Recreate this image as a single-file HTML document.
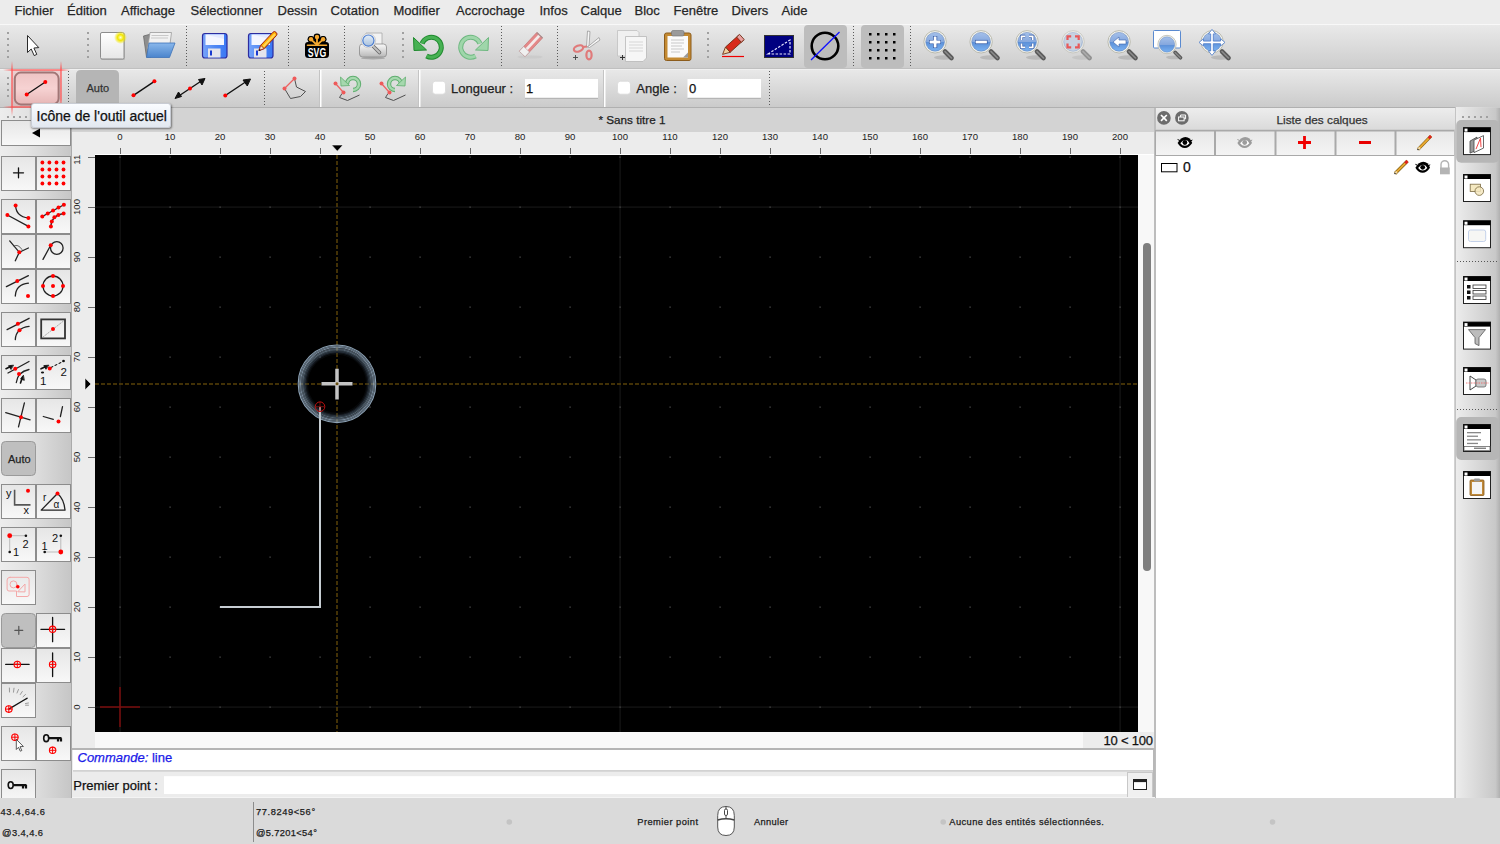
<!DOCTYPE html>
<html><head><meta charset="utf-8">
<style>
*{box-sizing:border-box;margin:0;padding:0}
html,body{width:1500px;height:844px;overflow:hidden;background:#e4e4e4;font-family:"Liberation Sans",sans-serif;color:#222;position:relative}
.a{position:absolute}
.t{position:absolute;white-space:nowrap;-webkit-text-stroke:0.25px currentColor}
#menubar{left:0;top:0;width:1500px;height:24px;background:#ececec}
#menubar .t{top:3px;font-size:13px;color:#262626;line-height:16px}
#tb1{left:0;top:24px;width:1500px;height:45px;background:linear-gradient(#e9e9e9,#cdcdcd);border-top:1px solid #f8f8f8;border-bottom:1px solid #c0c0c0}
#tb2{left:0;top:69px;width:1500px;height:39px;background:linear-gradient(#e8e8e8,#cbcbcb);border-top:1px solid #f0f0f0;border-bottom:1px solid #b0b0b0}
.hdl{position:absolute;width:2px;background:repeating-linear-gradient(#9a9a9a 0 2px,transparent 2px 6px)}
.sep{position:absolute;width:1px;background:repeating-linear-gradient(#6a6a6a 0 1px,transparent 1px 3px)}
.wsep{position:absolute;width:2px;background:#fff;border-left:1px solid #c8c8c8}
#tabbar{left:72px;top:108px;width:1083px;height:24px;background:#d3d3d3}
#hruler{left:72px;top:132px;width:1083px;height:23px;background:#ececec}
#vruler{left:72px;top:155px;width:23px;height:593px;background:#ececec}
#canvas{left:95px;top:155px;width:1043px;height:577px;background:#000;overflow:hidden}
#below{left:95px;top:732px;width:1060px;height:16px;background:#f8f8f8}
#vscroll{left:1138px;top:155px;width:16px;height:577px;background:#f8f8f8}
#lefttb{left:0;top:108px;width:72px;height:690px;background:linear-gradient(90deg,#ededed 0,#e2e2e2 40%,#c6c6c6 100%);border-right:1px solid #aaa}
.btn{position:absolute;width:35px;height:34px;background:linear-gradient(#e9e9e9,#f7f7f7);border:2px solid #a0a0a0}
#cmd{left:72px;top:748px;width:1083px;height:50px;background:#ececec}
#status{left:0;top:798px;width:1500px;height:46px;background:#dadada;border-top:1px solid #c8c8c8}
#dock{left:1154px;top:108px;width:301px;height:690px;background:#fff;border-left:2px solid #bdbdbd}
#righttb{left:1455px;top:107px;width:45px;height:691px;background:linear-gradient(90deg,#ececec,#c9c9c9);border-left:1px solid #c0c0c0}
.st{font-size:9.3px;color:#1a1a1a;line-height:12px}
</style></head><body>


<div id="menubar" class="a">
<span class="t" style="left:14.5px">Fichier</span>
<span class="t" style="left:67px">Édition</span>
<span class="t" style="left:121px">Affichage</span>
<span class="t" style="left:190.5px">Sélectionner</span>
<span class="t" style="left:277.5px">Dessin</span>
<span class="t" style="left:330.5px">Cotation</span>
<span class="t" style="left:393.5px">Modifier</span>
<span class="t" style="left:456px">Accrochage</span>
<span class="t" style="left:539.5px">Infos</span>
<span class="t" style="left:580.5px">Calque</span>
<span class="t" style="left:634.5px">Bloc</span>
<span class="t" style="left:673.5px">Fenêtre</span>
<span class="t" style="left:731.5px">Divers</span>
<span class="t" style="left:781.5px">Aide</span>
</div>
<div id="tb1" class="a"></div>
<div id="tb2" class="a"></div>
<div id="lefttb" class="a"></div>
<div id="tabbar" class="a"></div>
<div id="hruler" class="a"></div>
<div id="vruler" class="a"></div>
<div id="canvas" class="a"></div>
<div id="vscroll" class="a"></div>
<div id="below" class="a"></div>
<div id="cmd" class="a"></div>
<div id="dock" class="a"></div>
<div id="righttb" class="a"></div>
<div id="status" class="a"></div>


<svg class="a" style="left:0;top:0" width="1500" height="844" viewBox="0 0 1500 844">
<defs>
<linearGradient id="gPage" x1="0" y1="0" x2="0" y2="1"><stop offset="0" stop-color="#ffffff"/><stop offset="1" stop-color="#e6e6e6"/></linearGradient>
<radialGradient id="gGlow"><stop offset="0" stop-color="#ffffd0"/><stop offset="0.45" stop-color="#f2e600"/><stop offset="1" stop-color="#f2e600" stop-opacity="0"/></radialGradient>
<linearGradient id="gBlueFlap" x1="0" y1="0" x2="0" y2="1"><stop offset="0" stop-color="#8ab8ec"/><stop offset="1" stop-color="#4a84cc"/></linearGradient>
<linearGradient id="gLens" x1="0" y1="0" x2="0" y2="1"><stop offset="0" stop-color="#a4c0ea"/><stop offset="0.5" stop-color="#86a8de"/><stop offset="0.52" stop-color="#5c90d8"/><stop offset="1" stop-color="#7ab2f2"/></linearGradient>
<linearGradient id="gLensG" x1="0" y1="0" x2="0" y2="1"><stop offset="0" stop-color="#e4e8ee"/><stop offset="1" stop-color="#c4ccd8"/></linearGradient>
<linearGradient id="gPrinter" x1="0" y1="0" x2="0" y2="1"><stop offset="0" stop-color="#fafafa"/><stop offset="1" stop-color="#b8b8b8"/></linearGradient>
<linearGradient id="gBtn" x1="0" y1="0" x2="0" y2="1"><stop offset="0" stop-color="#e6e6e6"/><stop offset="1" stop-color="#f8f8f8"/></linearGradient>
<radialGradient id="gRing" gradientUnits="userSpaceOnUse" cx="337" cy="383.8" r="39.2"><stop offset="0.76" stop-color="#0a0c10"/><stop offset="0.84" stop-color="#3a4652"/><stop offset="0.93" stop-color="#7a8c9c"/><stop offset="0.97" stop-color="#90a2b2"/><stop offset="1" stop-color="#6a7a88"/></radialGradient>
<linearGradient id="gBtn2" x1="0" y1="0" x2="0" y2="1"><stop offset="0" stop-color="#e8e8e8"/><stop offset="1" stop-color="#f4f4f4"/></linearGradient>
<filter id="fBlur" x="-50%" y="-50%" width="200%" height="200%"><feGaussianBlur stdDeviation="0.7"/></filter>
<linearGradient id="gFlop" x1="0" y1="0" x2="1" y2="0"><stop offset="0" stop-color="#78a4fa"/><stop offset="0.5" stop-color="#5088f4"/><stop offset="1" stop-color="#3a78f4"/></linearGradient>
<linearGradient id="gLensG2" x1="0" y1="0" x2="0" y2="1"><stop offset="0" stop-color="#e4eef8"/><stop offset="1" stop-color="#a8c0dc"/></linearGradient>
</defs>

<g id="tb1">
<!-- handles -->
<g fill="#a0a0a0">
<rect x="7" y="32" width="2" height="2"/><rect x="7" y="38" width="2" height="2"/><rect x="7" y="44" width="2" height="2"/><rect x="7" y="50" width="2" height="2"/><rect x="7" y="56" width="2" height="2"/>
<rect x="87" y="32" width="2" height="2"/><rect x="87" y="38" width="2" height="2"/><rect x="87" y="44" width="2" height="2"/><rect x="87" y="50" width="2" height="2"/><rect x="87" y="56" width="2" height="2"/>
<rect x="402" y="32" width="2" height="2"/><rect x="402" y="38" width="2" height="2"/><rect x="402" y="44" width="2" height="2"/><rect x="402" y="50" width="2" height="2"/><rect x="402" y="56" width="2" height="2"/>
<rect x="707" y="32" width="2" height="2"/><rect x="707" y="38" width="2" height="2"/><rect x="707" y="44" width="2" height="2"/><rect x="707" y="50" width="2" height="2"/><rect x="707" y="56" width="2" height="2"/>
</g>
<!-- dotted separators -->
<g stroke="#5a5a5a" stroke-width="1" stroke-dasharray="1 2">
<line x1="186.5" y1="26" x2="186.5" y2="67"/>
<line x1="288.5" y1="26" x2="288.5" y2="67"/>
<line x1="344.5" y1="26" x2="344.5" y2="67"/>
<line x1="501.5" y1="26" x2="501.5" y2="67"/>
<line x1="557.5" y1="26" x2="557.5" y2="67"/>
<line x1="853.5" y1="26" x2="853.5" y2="67"/>
<line x1="910.5" y1="26" x2="910.5" y2="67"/>
</g>
<!-- arrow cursor -->
<path d="M27.5,35.5 L27.5,52.5 L31.2,49 L34.2,55.6 L36.8,54.4 L33.9,48 L38.8,47.6 Z" fill="#fff" stroke="#2a2a2a" stroke-width="1" stroke-linejoin="round"/>
<!-- new doc -->
<rect x="101" y="33" width="24" height="27" rx="1.5" fill="#9a9a9a" opacity="0.5"/>
<rect x="100.5" y="32.5" width="23.5" height="26.5" rx="1.5" fill="url(#gPage)" stroke="#8c8c8c"/>
<circle cx="120.5" cy="37.5" r="6.5" fill="url(#gGlow)"/>
<!-- open folder -->
<path d="M143.5,36 L151,34 L151,57 L146.5,57 Z" fill="#8e8e8e" stroke="#6a6a6a" stroke-width="0.8"/>
<path d="M150,32.5 L171.5,32.5 L170,44 L147.5,49 Z" fill="#f2f2f2" stroke="#9a9a9a" stroke-width="0.8"/>
<path d="M151.5,35.5 L168.5,35.5 M151,38 L168,38" stroke="#c8c8c8" stroke-width="1"/>
<path d="M149,43 L175,43 L169.5,57.5 L146.5,57.5 Z" fill="url(#gBlueFlap)" stroke="#3d72b8" stroke-width="0.8"/>
<!-- save -->
<g id="floppy">
<rect x="202.5" y="33.5" width="24.5" height="24.5" rx="2.5" fill="url(#gFlop)" stroke="#2c2ca0" stroke-width="1.2"/>
<rect x="205.5" y="34.5" width="18.5" height="10.5" fill="#f4f6ff"/>
<path d="M205.5,34.5 L224,34.5 L224,39 Z" fill="#dce4ff" opacity="0.7"/>
<rect x="208" y="48.5" width="12.5" height="9" fill="#e4e4ec"/>
<rect x="210" y="50.5" width="2" height="5" fill="#1a3ad0"/>
</g>
<use href="#floppy" x="46"/>
<g transform="translate(259,50.6) rotate(-46.8)">
<path d="M0,0 L5,-2.4 L23,-2.4 Q25,-2.4 25,0 Q25,2.4 23,2.4 L5,2.4 Z" fill="#ffb000" stroke="#9a1a10" stroke-width="0.9"/>
<rect x="6" y="-0.6" width="17" height="2" fill="#ffe070" opacity="0.8"/>
<path d="M0,0 L5,-2.4 L5,2.4 Z" fill="#f6e0b8" stroke="#9a1a10" stroke-width="0.7"/>
<circle cx="0.8" cy="0" r="0.9" fill="#222"/>
</g>
<!-- SVG logo -->
<g stroke-linecap="round">
<path d="M317,45 L311,39.3 M317,45 L317,37 M317,45 L323.1,39.3 M308,45 L326,45" stroke="#000" stroke-width="6"/>
<circle cx="311" cy="39.3" r="3.4" fill="#000"/><circle cx="317" cy="37" r="3.4" fill="#000"/><circle cx="323.1" cy="39.3" r="3.4" fill="#000"/>
<rect x="305" y="43" width="24" height="15" rx="3.5" fill="#000"/>
<path d="M317,45 L311,39.3 M317,45 L317,37 M317,45 L323.1,39.3" stroke="#f6a930" stroke-width="1.8"/>
<path d="M307.5,45.2 L326.5,45.2" stroke="#f6a930" stroke-width="1.6"/>
<circle cx="311" cy="39.3" r="2.2" fill="#f6a930"/><circle cx="317" cy="37" r="2.2" fill="#f6a930"/><circle cx="323.1" cy="39.3" r="2.2" fill="#f6a930"/>
</g>
<text x="307.8" y="57" font-family="Liberation Sans" font-weight="bold" font-size="13.5" fill="#fff" textLength="18.4" lengthAdjust="spacingAndGlyphs">SVG</text>
<!-- print preview -->
<path d="M366,33 L382,33 L382,46 L366,46 Z" fill="#f2f2f2" stroke="#a8a8a8" stroke-width="0.8"/>
<rect x="359.5" y="44" width="27" height="13" rx="3" fill="url(#gPrinter)" stroke="#8a8a8a" stroke-width="0.8"/>
<ellipse cx="373" cy="58.2" rx="12" ry="1.2" fill="#8a8a8a" opacity="0.6"/>
<line x1="373" y1="46" x2="379.5" y2="52.5" stroke="#6a6a6a" stroke-width="3.6" stroke-linecap="round"/>
<line x1="373" y1="46" x2="379.5" y2="52.5" stroke="#c0c0c0" stroke-width="1.8" stroke-linecap="round"/>
<circle cx="368.4" cy="40.6" r="7.2" fill="#f2f2f2" stroke="#c4c4c4" stroke-width="0.8"/>
<circle cx="368.4" cy="40.6" r="5.6" fill="url(#gLensG2)" stroke="#4a7cd0" stroke-width="1.2"/>
<!-- undo -->
<path d="M422,43.5 A10 10 0 1 1 426.5,56" fill="none" stroke="#1f8a2e" stroke-width="5"/>
<path d="M422,43.5 A10 10 0 1 1 426.5,56" fill="none" stroke="#47b153" stroke-width="3"/>
<path d="M413.5,37.5 L414,50.5 L426.5,50 Z" fill="#47b153" stroke="#1f8a2e" stroke-width="1"/>
<!-- redo -->
<path d="M480,43.5 A10 10 0 1 0 475.5,56" fill="none" stroke="#6eb880" stroke-width="5"/>
<path d="M480,43.5 A10 10 0 1 0 475.5,56" fill="none" stroke="#9fd6aa" stroke-width="3"/>
<path d="M488.5,37.5 L488,50.5 L475.5,50 Z" fill="#9fd6aa" stroke="#6eb880" stroke-width="1"/>
<!-- eraser -->
<ellipse cx="530" cy="57" rx="12.5" ry="1.6" fill="#c4c4c4" opacity="0.6"/>
<g transform="rotate(-47 531 44.5)">
<rect x="518" y="40.5" width="26" height="8" rx="1" fill="#e48888" stroke="#c47070" stroke-width="0.6"/>
<rect x="518" y="43.2" width="26" height="2.6" fill="#f4eaea"/>
<rect x="518" y="40.5" width="6.5" height="8" fill="#f0f0f0" stroke="#b8a8a8" stroke-width="0.6"/>
<rect x="543" y="40.5" width="1.2" height="8" fill="#a89090"/>
</g>
<!-- scissors -->
<path d="M586.5,47 L587.5,31 L590,31.5 L589,46 Z" fill="#f6f6f6" stroke="#9a9a9a" stroke-width="0.8"/>
<path d="M587.5,47 L599,37.5 L600,40 L589.5,47.5 Z" fill="#f6f6f6" stroke="#9a9a9a" stroke-width="0.8"/>
<ellipse cx="578.5" cy="48.5" rx="4.8" ry="2.9" fill="none" stroke="#e07a7a" stroke-width="2.2" transform="rotate(-20 578.5 48.5)"/>
<ellipse cx="589" cy="55" rx="2.6" ry="4.4" fill="none" stroke="#e07a7a" stroke-width="2.2"/>
<path d="M583,47 L587,46.5" stroke="#e07a7a" stroke-width="2"/>
<path d="M573,57.5 L578,57.5 M575.5,55 L575.5,60" stroke="#444" stroke-width="0.9"/>
<!-- copy -->
<path d="M617.5,30.5 L637,30.5 L639,32.5 L639,56 L617.5,56 Z" fill="#f0f0f0" stroke="#c0c0c0" stroke-width="0.8"/>
<path d="M625.5,36.5 L646.5,36.5 L646.5,58 L643,61.5 L625.5,61.5 Z" fill="#f6f6f6" stroke="#b8b8b8" stroke-width="0.8"/>
<path d="M629,42 L643,42 M629,45 L643,45 M629,48 L643,48 M629,51 L643,51" stroke="#d6d6d6" stroke-width="1"/>
<path d="M620,57.5 L625,57.5 M622.5,55 L622.5,60" stroke="#333" stroke-width="1"/>
<!-- paste -->
<rect x="664.5" y="33" width="26.5" height="27.5" rx="2" fill="#c48a32" stroke="#8c5c1c" stroke-width="1"/>
<rect x="667.5" y="36" width="20.5" height="21.5" fill="#fafafa"/>
<rect x="671.5" y="30.5" width="12.5" height="5.5" rx="1.5" fill="#9a9a9a" stroke="#707070" stroke-width="0.6"/>
<path d="M671,40 L684,40 M671,43 L684,43 M671,46 L682,46 M671,49 L684,49 M671,52 L680,52" stroke="#c8c8c8" stroke-width="1"/>
<path d="M683,57.5 L688,52.5 L688,57.5 Z" fill="#9a9a9a"/>
<!-- pencil -->
<line x1="722" y1="56.5" x2="744" y2="56.5" stroke="#f00000" stroke-width="1.2"/>
<g transform="rotate(-42 733 45)">
<rect x="726" y="41.5" width="18" height="7" fill="#d82a1a" stroke="#6a2a10" stroke-width="0.8"/>
<rect x="741" y="41.5" width="4" height="7" fill="#e8a0a0" stroke="#6a2a10" stroke-width="0.8"/>
<path d="M726,41.5 L719,45 L726,48.5 Z" fill="#f0d0a0" stroke="#6a2a10" stroke-width="0.8"/>
</g>
<!-- blue rect -->
<rect x="764.5" y="35.5" width="29" height="22" fill="#000080" stroke="#333" stroke-width="1"/>
<path d="M768,54 L790,40 L790,54 Z" fill="none" stroke="#e8e8ff" stroke-width="1.2" stroke-dasharray="2.5 1.5"/>
<!-- pressed: circle -->
<rect x="804" y="25" width="43" height="43" rx="4" fill="#bdbdbd"/>
<circle cx="825" cy="46" r="13.3" fill="none" stroke="#000" stroke-width="2.6"/>
<line x1="811" y1="60" x2="839.5" y2="32" stroke="#1010ff" stroke-width="1.3"/>
<!-- pressed: grid -->
<rect x="861" y="25" width="43" height="43" rx="4" fill="#bdbdbd"/>
<g fill="#000">
<rect x="869" y="33" width="2.5" height="2.5"/><rect x="877" y="33" width="2.5" height="2.5"/><rect x="885" y="33" width="2.5" height="2.5"/><rect x="893" y="33" width="2.5" height="2.5"/>
<rect x="869" y="41" width="2.5" height="2.5"/><rect x="877" y="41" width="2.5" height="2.5"/><rect x="885" y="41" width="2.5" height="2.5"/><rect x="893" y="41" width="2.5" height="2.5"/>
<rect x="869" y="49" width="2.5" height="2.5"/><rect x="877" y="49" width="2.5" height="2.5"/><rect x="885" y="49" width="2.5" height="2.5"/><rect x="893" y="49" width="2.5" height="2.5"/>
<rect x="869" y="57" width="2.5" height="2.5"/><rect x="877" y="57" width="2.5" height="2.5"/><rect x="885" y="57" width="2.5" height="2.5"/><rect x="893" y="57" width="2.5" height="2.5"/>
</g>
<!-- zoom lenses -->
<g id="lensA">
<ellipse cx="944" cy="57.5" rx="10" ry="2.2" fill="#7a7a7a" opacity="0.3"/>
<line x1="945" y1="51.5" x2="951.5" y2="58" stroke="#5a5a5a" stroke-width="4.6" stroke-linecap="round"/>
<line x1="945" y1="51.5" x2="951.5" y2="58" stroke="#8a8a8a" stroke-width="1.6" stroke-linecap="round"/>
<circle cx="935.1" cy="41.8" r="11.2" fill="#f4f4ee" stroke="#b4b4a8" stroke-width="0.9"/>
<circle cx="935.1" cy="41.8" r="9.4" fill="url(#gLens)" stroke="#5a7cb4" stroke-width="0.5"/>
</g>
<path d="M929,42 L941,42 M935.1,36 L935.1,48" stroke="#2a52a0" stroke-width="4.2"/>
<path d="M929.6,42 L940.4,42 M935.1,36.6 L935.1,47.4" stroke="#fff" stroke-width="2.8"/>
<use href="#lensA" x="46"/>
<path d="M975,42 L987.5,42" stroke="#2a52a0" stroke-width="4.2"/>
<path d="M975.6,42 L986.9,42" stroke="#fff" stroke-width="2.8"/>
<use href="#lensA" x="92"/>
<path d="M1021.5,40 L1021.5,36.3 L1025.2,36.3 M1029,36.3 L1032.7,36.3 L1032.7,40 M1032.7,43.6 L1032.7,47.3 L1029,47.3 M1025.2,47.3 L1021.5,47.3 L1021.5,43.6" stroke="#2a52a0" stroke-width="3" fill="none"/><path d="M1021.5,40 L1021.5,36.3 L1025.2,36.3 M1029,36.3 L1032.7,36.3 L1032.7,40 M1032.7,43.6 L1032.7,47.3 L1029,47.3 M1025.2,47.3 L1021.5,47.3 L1021.5,43.6" stroke="#fff" stroke-width="1.8" fill="none"/>
<g opacity="0.55"><use href="#lensA" x="138"/></g>
<circle cx="1073" cy="42" r="8.8" fill="#c8d2e0"/>
<path d="M1067.5,40 L1067.5,36.3 L1071.2,36.3 M1075,36.3 L1078.7,36.3 L1078.7,40 M1078.7,43.6 L1078.7,47.3 L1075,47.3 M1071.2,47.3 L1067.5,47.3 L1067.5,43.6" stroke="#e85858" stroke-width="2.2" fill="none"/>
<use href="#lensA" x="184"/>
<path d="M1113,42 L1119,37 L1119,40 L1126,40 L1126,44 L1119,44 L1119,47 Z" fill="#fff" stroke="#3a62a8" stroke-width="0.6"/>
<rect x="1153.5" y="30.5" width="27" height="17.5" rx="1" fill="#fff" stroke="#5a8ad0" stroke-width="1"/>
<g transform="translate(1167,44.5) scale(0.82) translate(-935.1,-41.8)"><use href="#lensA"/></g>
<use href="#lensA" x="277"/>
<g transform="translate(1212,42.4)">
<path d="M0,-13 L3.6,-8.5 L1.3,-8.5 L1.3,-1.3 L8.5,-1.3 L8.5,-3.6 L13,0 L8.5,3.6 L8.5,1.3 L1.3,1.3 L1.3,8.5 L3.6,8.5 L0,13 L-3.6,8.5 L-1.3,8.5 L-1.3,1.3 L-8.5,1.3 L-8.5,3.6 L-13,0 L-8.5,-3.6 L-8.5,-1.3 L-1.3,-1.3 L-1.3,-8.5 L-3.6,-8.5 Z" fill="#fff" stroke="#4a7ac8" stroke-width="0.8" stroke-linejoin="round"/>
</g>
</g>

<g id="tb2">
<g fill="#a0a0a0">
<rect x="7" y="77" width="2" height="2"/><rect x="7" y="83" width="2" height="2"/><rect x="7" y="89" width="2" height="2"/><rect x="7" y="95" width="2" height="2"/>
</g>
<g stroke="#5a5a5a" stroke-width="1" stroke-dasharray="1 2">
<line x1="68.5" y1="71" x2="68.5" y2="106"/>
<line x1="264.5" y1="71" x2="264.5" y2="106"/>
<line x1="769.5" y1="71" x2="769.5" y2="106"/>
</g>
<!-- white separators -->
<g>
<rect x="319" y="70" width="1" height="37" fill="#c4c4c4"/><rect x="320" y="70" width="1.5" height="37" fill="#ffffff"/>
<rect x="418" y="70" width="1" height="37" fill="#c4c4c4"/><rect x="419" y="70" width="1.5" height="37" fill="#ffffff"/>
<rect x="603" y="70" width="1" height="37" fill="#c4c4c4"/><rect x="604" y="70" width="1.5" height="37" fill="#ffffff"/>
</g>
<!-- current tool (pink) -->
<defs>
<linearGradient id="gRV" x1="0" y1="0" x2="0" y2="1"><stop offset="0" stop-color="#ff5050" stop-opacity="0"/><stop offset="0.15" stop-color="#ff5050" stop-opacity="0.62"/><stop offset="0.82" stop-color="#ff5050" stop-opacity="0.62"/><stop offset="1" stop-color="#ff5050" stop-opacity="0"/></linearGradient>
<linearGradient id="gRH" x1="0" y1="0" x2="1" y2="0"><stop offset="0" stop-color="#ff5050" stop-opacity="0"/><stop offset="0.14" stop-color="#ff5050" stop-opacity="0.62"/><stop offset="0.86" stop-color="#ff5050" stop-opacity="0.62"/><stop offset="1" stop-color="#ff5050" stop-opacity="0"/></linearGradient>
<linearGradient id="gPink" x1="0" y1="0" x2="0" y2="1"><stop offset="0" stop-color="#eec4c4"/><stop offset="0.5" stop-color="#f6d2d2"/><stop offset="1" stop-color="#e6b6b6"/></linearGradient>
</defs>
<rect x="12" y="70" width="49" height="37" fill="#ff8080" opacity="0.22"/>
<rect x="14.8" y="72.6" width="43.8" height="31.8" rx="6" fill="url(#gPink)" stroke="#a07676" stroke-width="2"/>
<line x1="26.7" y1="94.5" x2="45.3" y2="82" stroke="#111" stroke-width="1.3"/>
<circle cx="26.7" cy="94.5" r="2" fill="#f00"/><circle cx="45.3" cy="82" r="2" fill="#f00"/>
<g filter="url(#fBlur)">
<rect x="11" y="61" width="2" height="55" fill="url(#gRV)"/>
<rect x="60" y="61" width="2" height="47" fill="url(#gRV)"/>
<rect x="3" y="69" width="67" height="2" fill="url(#gRH)"/>
<rect x="3" y="106" width="67" height="2" fill="url(#gRH)"/>
</g>
<!-- auto pressed -->
<path d="M76,107 L76,75 Q76,70 81,70 L114,70 Q119,70 119,75 L119,107 Z" fill="#b5b5b5"/>
<!-- line icons -->
<line x1="133.5" y1="95.3" x2="154.4" y2="81.3" stroke="#111" stroke-width="1.4"/>
<circle cx="133.5" cy="95.3" r="2" fill="#f00"/><circle cx="154.4" cy="81.3" r="2" fill="#f00"/>
<line x1="178" y1="96.5" x2="202" y2="80.5" stroke="#111" stroke-width="1.4"/>
<path d="M175,98.5 L178.5,92 L181.5,96.5 Z M205,78.5 L198.5,79.5 L202,85 Z" fill="#111" stroke="#111" stroke-width="1"/>
<circle cx="190" cy="88.5" r="2" fill="#f00"/>
<line x1="225.3" y1="95.5" x2="247" y2="81" stroke="#111" stroke-width="1.4"/>
<path d="M250.5,79 L243,80 L247.3,86 Z" fill="#111" stroke="#111" stroke-width="1"/>
<circle cx="225.3" cy="95.5" r="2" fill="#f00"/>
<!-- polyline (disabled) -->
<path d="M294.5,78.5 L296.5,87 L305.5,91.5 L300.5,96.5 L290.5,98.5 L284.5,88.5" fill="none" stroke="#505050" stroke-width="1"/>
<line x1="284.5" y1="88.5" x2="294.5" y2="78.5" stroke="#ee6060" stroke-width="1.2"/>
<circle cx="284.5" cy="88.5" r="2" fill="#ee5a5a"/><circle cx="294.5" cy="78.5" r="2" fill="#ee5a5a"/>
<!-- undo segment -->
<path d="M342,93.5 L339.5,97.5 L347.5,100.5 L359.5,95" fill="none" stroke="#505050" stroke-width="1"/>
<path d="M347,84 A6 6 0 1 1 353,90" fill="none" stroke="#5fae6f" stroke-width="4.4"/>
<path d="M347,84 A6 6 0 1 1 353,90" fill="none" stroke="#a6d8ae" stroke-width="2.4"/>
<path d="M340.5,77 L341,86 L349.5,85.5 Z" fill="#a6d8ae" stroke="#5fae6f" stroke-width="0.8"/>
<line x1="335.5" y1="83.5" x2="343.5" y2="92.5" stroke="#ee6060" stroke-width="1.2"/>
<circle cx="335.5" cy="83.5" r="2" fill="#ee5a5a"/><circle cx="343.5" cy="92.5" r="2" fill="#ee5a5a"/>
<!-- redo segment -->
<path d="M388,93.5 L385.5,97.5 L393.5,100.5 L405.5,95" fill="none" stroke="#505050" stroke-width="1"/>
<path d="M401,84 A6 6 0 1 0 395,90" fill="none" stroke="#5fae6f" stroke-width="4.4"/>
<path d="M401,84 A6 6 0 1 0 395,90" fill="none" stroke="#a6d8ae" stroke-width="2.4"/>
<path d="M405.5,77 L405,86 L396.5,85.5 Z" fill="#a6d8ae" stroke="#5fae6f" stroke-width="0.8"/>
<line x1="381.5" y1="83.5" x2="389.5" y2="92.5" stroke="#ee6060" stroke-width="1.2"/>
<circle cx="381.5" cy="83.5" r="2" fill="#ee5a5a"/><circle cx="389.5" cy="92.5" r="2" fill="#ee5a5a"/>
<!-- checkboxes and inputs -->
<rect x="432.5" y="81.2" width="13" height="13" rx="3" fill="#fff" stroke="#d8d8d8" stroke-width="0.8"/>
<rect x="525" y="79" width="73" height="19.5" fill="#fff"/>
<rect x="525" y="97.8" width="73" height="1" fill="#a8a8a8"/>
<rect x="617.5" y="81.2" width="13" height="13" rx="3" fill="#fff" stroke="#d8d8d8" stroke-width="0.8"/>
<rect x="687.5" y="79" width="73.5" height="19.5" fill="#fff"/>
<rect x="687.5" y="97.8" width="73.5" height="1" fill="#a8a8a8"/>
</g>

<g id="lefttb">
<rect x="7" y="116" width="2" height="2" fill="#a0a0a0"/>
<rect x="13" y="116" width="2" height="2" fill="#a0a0a0"/>
<rect x="19" y="116" width="2" height="2" fill="#a0a0a0"/>
<rect x="25" y="116" width="2" height="2" fill="#a0a0a0"/>
<rect x="1.5" y="120.5" width="69" height="25" fill="url(#gBtn)" stroke="#8c8c8c" stroke-width="1"/>
<path d="M32,133 L40,128.5 L40,137.5 Z" fill="#000"/>
<rect x="1.5" y="156.5" width="34" height="34" fill="url(#gBtn)" stroke="#8c8c8c" stroke-width="1"/>
<rect x="36.5" y="156.5" width="34" height="34" fill="url(#gBtn)" stroke="#8c8c8c" stroke-width="1"/>
<rect x="1.5" y="199.5" width="34" height="34" fill="url(#gBtn)" stroke="#8c8c8c" stroke-width="1"/>
<rect x="36.5" y="199.5" width="34" height="34" fill="url(#gBtn)" stroke="#8c8c8c" stroke-width="1"/>
<rect x="1.5" y="234.5" width="34" height="34" fill="url(#gBtn)" stroke="#8c8c8c" stroke-width="1"/>
<rect x="36.5" y="234.5" width="34" height="34" fill="url(#gBtn)" stroke="#8c8c8c" stroke-width="1"/>
<rect x="1.5" y="269.5" width="34" height="34" fill="url(#gBtn)" stroke="#8c8c8c" stroke-width="1"/>
<rect x="36.5" y="269.5" width="34" height="34" fill="url(#gBtn)" stroke="#8c8c8c" stroke-width="1"/>
<rect x="1.5" y="312.5" width="34" height="34" fill="url(#gBtn)" stroke="#8c8c8c" stroke-width="1"/>
<rect x="36.5" y="312.5" width="34" height="34" fill="url(#gBtn)" stroke="#8c8c8c" stroke-width="1"/>
<rect x="1.5" y="355.5" width="34" height="34" fill="url(#gBtn)" stroke="#8c8c8c" stroke-width="1"/>
<rect x="36.5" y="355.5" width="34" height="34" fill="url(#gBtn)" stroke="#8c8c8c" stroke-width="1"/>
<rect x="1.5" y="398.5" width="34" height="34" fill="url(#gBtn)" stroke="#8c8c8c" stroke-width="1"/>
<rect x="36.5" y="398.5" width="34" height="34" fill="url(#gBtn)" stroke="#8c8c8c" stroke-width="1"/>
<rect x="1.5" y="441.5" width="34" height="34" rx="4" fill="#bfbfbf" stroke="#9a9a9a" stroke-width="1"/>
<rect x="1.5" y="484.5" width="34" height="34" fill="url(#gBtn)" stroke="#8c8c8c" stroke-width="1"/>
<rect x="36.5" y="484.5" width="34" height="34" fill="url(#gBtn)" stroke="#8c8c8c" stroke-width="1"/>
<rect x="1.5" y="527.5" width="34" height="34" fill="url(#gBtn)" stroke="#8c8c8c" stroke-width="1"/>
<rect x="36.5" y="527.5" width="34" height="34" fill="url(#gBtn)" stroke="#8c8c8c" stroke-width="1"/>
<rect x="1.5" y="570.5" width="34" height="34" fill="url(#gBtn)" stroke="#8c8c8c" stroke-width="1"/>
<rect x="1.5" y="613.5" width="34" height="34" rx="4" fill="#bfbfbf" stroke="#9a9a9a" stroke-width="1"/>
<rect x="36.5" y="613.5" width="34" height="34" fill="url(#gBtn)" stroke="#8c8c8c" stroke-width="1"/>
<rect x="1.5" y="648.5" width="34" height="34" fill="url(#gBtn)" stroke="#8c8c8c" stroke-width="1"/>
<rect x="36.5" y="648.5" width="34" height="34" fill="url(#gBtn)" stroke="#8c8c8c" stroke-width="1"/>
<rect x="1.5" y="683.5" width="34" height="34" fill="url(#gBtn)" stroke="#8c8c8c" stroke-width="1"/>
<rect x="1.5" y="726.5" width="34" height="34" fill="url(#gBtn)" stroke="#8c8c8c" stroke-width="1"/>
<rect x="36.5" y="726.5" width="34" height="34" fill="url(#gBtn)" stroke="#8c8c8c" stroke-width="1"/>
<rect x="1.5" y="769.5" width="34" height="34" fill="url(#gBtn)" stroke="#8c8c8c" stroke-width="1"/>
</g>
<g id="lefticons" stroke-linecap="round">
<!-- row 156 -->
<g transform="translate(1,156)">
<path d="M12.5,16.8 L22.5,16.8 M17.5,11.8 L17.5,21.8" stroke="#111" stroke-width="1.3"/>
</g>
<g transform="translate(36,156)" fill="#f00">
<circle cx="6.4" cy="6.5" r="1.9"/><circle cx="13.4" cy="6.5" r="1.9"/><circle cx="20.5" cy="6.5" r="1.9"/><circle cx="27.5" cy="6.5" r="1.9"/>
<circle cx="6.4" cy="13.5" r="1.9"/><circle cx="13.4" cy="13.5" r="1.9"/><circle cx="20.5" cy="13.5" r="1.9"/><circle cx="27.5" cy="13.5" r="1.9"/>
<circle cx="6.4" cy="20.5" r="1.9"/><circle cx="13.4" cy="20.5" r="1.9"/><circle cx="20.5" cy="20.5" r="1.9"/><circle cx="27.5" cy="20.5" r="1.9"/>
<circle cx="6.4" cy="27.5" r="1.9"/><circle cx="13.4" cy="27.5" r="1.9"/><circle cx="20.5" cy="27.5" r="1.9"/><circle cx="27.5" cy="27.5" r="1.9"/>
</g>
<!-- row 199 -->
<g transform="translate(1,199)">
<path d="M6.4,16 L27.4,27.4 M14.6,6.4 Q15,17.5 27.4,18.9" fill="none" stroke="#222" stroke-width="1.3"/>
<g fill="#f00"><circle cx="6.4" cy="16" r="2"/><circle cx="27.4" cy="27.4" r="2"/><circle cx="14.6" cy="6.4" r="2"/><circle cx="27.4" cy="18.9" r="2"/></g>
</g>
<g transform="translate(36,199)">
<path d="M6.3,17.5 L27.9,5.7 M14.9,27.4 Q15.5,16 27.6,14.6" fill="none" stroke="#222" stroke-width="1.3"/>
<g fill="#f00"><circle cx="6.3" cy="17.5" r="2"/><circle cx="11.7" cy="14.5" r="2"/><circle cx="17.1" cy="11.6" r="2"/><circle cx="22.5" cy="8.6" r="2"/><circle cx="27.9" cy="5.7" r="2"/>
<circle cx="14.9" cy="27.4" r="2"/><circle cx="15.8" cy="22.5" r="2"/><circle cx="18.4" cy="18.2" r="2"/><circle cx="22.4" cy="15.9" r="2"/><circle cx="27.6" cy="14.6" r="2"/></g>
</g>
<!-- row 234 -->
<g transform="translate(1,234)">
<path d="M8.7,6.9 L18.3,18.3 L27.4,14 M18.3,18.3 L14.3,26.8" fill="none" stroke="#222" stroke-width="1.3"/>
<path d="M13,12 Q17,9.5 21,15.5" fill="none" stroke="#444" stroke-width="0.8"/>
<circle cx="18.3" cy="18.3" r="2" fill="#f00"/>
</g>
<g transform="translate(36,234)">
<path d="M7,25.4 L14.7,11.2" stroke="#222" stroke-width="1.3"/>
<circle cx="20.8" cy="14" r="6.3" fill="none" stroke="#222" stroke-width="1.3"/>
<circle cx="14.7" cy="11.2" r="2" fill="#f00"/>
</g>
<!-- row 269 -->
<g transform="translate(1,269)">
<path d="M5.4,17.6 L27.4,6.7 M14.3,27 Q15,15.5 27.4,14.2" fill="none" stroke="#222" stroke-width="1.3"/>
<circle cx="16.3" cy="12" r="2" fill="#f00"/><circle cx="27" cy="27" r="2" fill="#f00"/>
</g>
<g transform="translate(36,269)">
<circle cx="17" cy="17" r="10" fill="none" stroke="#222" stroke-width="1.3"/>
<g fill="#f00"><circle cx="17" cy="17" r="2"/><circle cx="17" cy="7" r="2"/><circle cx="17" cy="27" r="2"/><circle cx="7" cy="17" r="2"/><circle cx="27" cy="17" r="2"/></g>
</g>
<!-- row 312 -->
<g transform="translate(1,312)">
<path d="M6.1,17.6 L28.1,6.3 M14.3,27.6 Q15,16 28.1,14.4" fill="none" stroke="#222" stroke-width="1.3"/>
<circle cx="16.9" cy="11.7" r="2" fill="#f00"/><circle cx="18.5" cy="18.3" r="2" fill="#f00"/>
</g>
<g transform="translate(36,312)">
<rect x="5.2" y="7.4" width="23.8" height="19" fill="none" stroke="#333" stroke-width="1.8"/>
<path d="M7,25 L27.5,9" stroke="#999" stroke-width="0.8" stroke-dasharray="1.5 1.5"/>
<circle cx="17" cy="16.9" r="2" fill="#f00"/>
</g>
<!-- row 355 -->
<g transform="translate(0,355)">
<path d="M8,18 L29,6.5 M16.3,27.5 Q17.5,17 29,14.5" fill="none" stroke="#222" stroke-width="1.3"/>
<path d="M6,13.7 L11,11.2 M20.5,28 L22.5,22" stroke="#111" stroke-width="1.6"/>
<path d="M13.2,10.2 L8.5,10.7 L10.8,14.2 Z M23.2,20.5 L20.6,24 L24,25.2 Z" fill="#111" stroke="#111" stroke-width="0.8" stroke-linejoin="round"/>
<circle cx="15.3" cy="13.7" r="2" fill="#f00"/><circle cx="19" cy="19" r="2" fill="#f00"/>
</g>
<g transform="translate(36,355)">
<path d="M15,12.5 L28,6" stroke="#222" stroke-width="1.1" stroke-dasharray="2 2.5"/>
<path d="M5,13.8 L10,11.5" stroke="#111" stroke-width="1.6"/>
<path d="M12.5,10.2 L7.8,10.6 L9.8,14 Z" fill="#111" stroke="#111" stroke-width="0.8" stroke-linejoin="round"/>
<ellipse cx="6.5" cy="17.5" rx="1.6" ry="1.1" fill="#111"/>
<circle cx="13.7" cy="13.5" r="2" fill="#f00"/><circle cx="27.5" cy="6" r="1.3" fill="#111"/>
<text x="4" y="30" font-family="Liberation Sans" font-size="11.5" fill="#111">1</text>
<text x="24.5" y="20.5" font-family="Liberation Sans" font-size="11.5" fill="#111">2</text>
</g>
<!-- row 398 -->
<g transform="translate(1,398)">
<path d="M4.7,14.7 L29.1,21.8 M23.4,4.8 L17.5,28.9" stroke="#222" stroke-width="1.3"/>
<circle cx="20" cy="19.2" r="2" fill="#f00"/>
</g>
<g transform="translate(36,398)">
<path d="M7.3,18.5 L17.3,21.4 M26.5,8.6 L24.4,18.5" stroke="#222" stroke-width="1.3"/>
<circle cx="22.5" cy="23.5" r="2" fill="#f00"/>
</g>
<!-- row 484 -->
<g transform="translate(1,484)">
<path d="M13.6,5.7 L13.6,20.9 L29.5,20.9" fill="none" stroke="#555" stroke-width="1.6" stroke-linecap="butt"/>
<text x="5" y="13" font-family="Liberation Sans" font-size="11" fill="#111">y</text>
<text x="22.5" y="30" font-family="Liberation Sans" font-size="11" fill="#111">x</text>
<circle cx="27" cy="6.7" r="2" fill="#f00"/>
</g>
<g transform="translate(36,484)">
<path d="M5.2,26.1 L29,26.1 M5.2,26.1 L21.5,9.5 Q28,15 29,26.1" fill="none" stroke="#222" stroke-width="1.3"/>
<text x="7" y="17" font-family="Liberation Sans" font-size="10" fill="#111">r</text>
<text x="17.5" y="24" font-family="Liberation Sans" font-size="10" fill="#111">α</text>
<circle cx="21.5" cy="9.5" r="2" fill="#f00"/>
</g>
<!-- row 527 -->
<g transform="translate(1,527)">
<path d="M8.7,8.7 L24.9,8.7 M8.7,8.7 L8.7,25" stroke="#bbb" stroke-width="1"/>
<circle cx="8.7" cy="8.7" r="2.4" fill="#f00"/><circle cx="24.9" cy="8.7" r="1.3" fill="#111"/><circle cx="8.7" cy="25" r="1.3" fill="#111"/>
<text x="21.5" y="20.5" font-family="Liberation Sans" font-size="11" fill="#111">2</text>
<text x="12" y="28.5" font-family="Liberation Sans" font-size="11" fill="#111">1</text>
</g>
<g transform="translate(36,527)">
<path d="M8.7,25 L24.8,25 M24.8,8.7 L24.8,25" stroke="#bbb" stroke-width="1"/>
<circle cx="24.8" cy="25" r="2.4" fill="#f00"/><circle cx="24.8" cy="8.7" r="1.3" fill="#111"/><circle cx="8.7" cy="25" r="1.3" fill="#111"/>
<text x="16" y="14.5" font-family="Liberation Sans" font-size="11" fill="#111">2</text>
<text x="5.5" y="22.5" font-family="Liberation Sans" font-size="11" fill="#111">1</text>
</g>
<!-- row 570 (disabled) -->
<g transform="translate(1,570)">
<path d="M9,7.3 L26,7.3 Q28.1,7.3 28.1,9.5 L28.1,24.5 Q28.1,26.5 26,26.5 L15.5,26.5 L15.5,21 L8,21 Q6.1,21 6.1,19 L6.1,10 Q6.1,7.3 9,7.3 Z" fill="none" stroke="#f4a8a8" stroke-width="1"/>
<circle cx="12.5" cy="14.4" r="3.5" fill="none" stroke="#f4a8a8" stroke-width="1"/>
<path d="M17,21.5 L24,14 L24,21.5 Z" fill="none" stroke="#f4a8a8" stroke-width="1"/>
<circle cx="16.8" cy="16.8" r="1.8" fill="#f00"/>
</g>
<!-- row 613 -->
<g transform="translate(1,613)">
<path d="M13.8,17.3 L21.8,17.3 M17.8,13.3 L17.8,21.3" stroke="#555" stroke-width="1.2"/>
</g>
<g id="xhair" transform="translate(36,613)">
<path d="M16.6,4.5 L16.6,28.7 M4.9,16.3 L28.6,16.3" stroke="#111" stroke-width="1.3"/>
<circle cx="16.6" cy="16.3" r="3.2" fill="none" stroke="#f00" stroke-width="1.1"/>
<path d="M13.4,16.3 L19.8,16.3 M16.6,13.1 L16.6,19.5" stroke="#f00" stroke-width="1"/>
</g>
<!-- row 648 -->
<g transform="translate(1,648)">
<path d="M4.7,16.4 L28.1,16.4" stroke="#111" stroke-width="1.3"/>
<circle cx="16.3" cy="16.4" r="3.2" fill="none" stroke="#f00" stroke-width="1.1"/>
<path d="M13.1,16.4 L19.5,16.4 M16.3,13.2 L16.3,19.6" stroke="#f00" stroke-width="1"/>
</g>
<g transform="translate(36,648)">
<path d="M16.6,5 L16.6,28.5" stroke="#111" stroke-width="1.3"/>
<circle cx="16.6" cy="16.4" r="3.2" fill="none" stroke="#f00" stroke-width="1.1"/>
<path d="M13.4,16.4 L19.8,16.4 M16.6,13.2 L16.6,19.6" stroke="#f00" stroke-width="1"/>
</g>
<!-- row 683 meter -->
<g transform="translate(1,683)">
<g stroke="#999" stroke-width="1">
<path d="M8.4,5 L8.5,9 M13,5.2 L12.5,9.2 M17.5,6.5 L16,10 M21.3,8.5 L19.3,11.5 M24.5,11.5 L22,13.8 M26.5,15.5 L24,16.8 M27.5,20 L24.5,20.5 M27.5,22.2 L24.5,22.2"/>
</g>
<path d="M7.8,26.1 L26,15.2" stroke="#111" stroke-width="1.3"/>
<circle cx="7.8" cy="26.1" r="3.3" fill="none" stroke="#f00" stroke-width="1.1"/>
<path d="M4.5,26.1 L11.1,26.1 M7.8,22.8 L7.8,29.4" stroke="#f00" stroke-width="1"/>
</g>
<!-- row 726 -->
<g transform="translate(1,726)">
<circle cx="13.9" cy="11.2" r="3.2" fill="none" stroke="#f00" stroke-width="1.1"/>
<path d="M10.7,11.2 L17.1,11.2 M13.9,8 L13.9,14.4" stroke="#f00" stroke-width="1"/>
<path d="M15.3,13.7 L15.3,23.5 L17.5,21.3 L19.3,25.2 L20.8,24.5 L19,20.7 L22,20.5 Z" fill="#fff" stroke="#333" stroke-width="0.8" stroke-linejoin="round"/>
</g>
<g id="key" transform="translate(36,726)">
<ellipse cx="10.2" cy="12.2" rx="2.5" ry="3.4" fill="none" stroke="#111" stroke-width="1.6"/>
<path d="M12.7,12.2 L25.5,12.2 M22,12.2 L22,15.5 M25,12.2 L25,15.5" stroke="#111" stroke-width="2.2" stroke-linecap="butt"/>
<circle cx="16.6" cy="24.3" r="3.2" fill="none" stroke="#f00" stroke-width="1.1"/>
<path d="M13.4,24.3 L19.8,24.3 M16.6,21.1 L16.6,27.5" stroke="#f00" stroke-width="1"/>
</g>
<!-- row 769 -->
<g transform="translate(1,769)">
<ellipse cx="9.7" cy="16.1" rx="2.5" ry="3.4" fill="none" stroke="#111" stroke-width="1.6"/>
<path d="M12.2,16.1 L25.5,16.1 M22,16.1 L22,19.4 M25,16.1 L25,19.4" stroke="#111" stroke-width="2.2" stroke-linecap="butt"/>
</g>
</g>

<g id="rulers">
<rect x="120" y="148" width="1" height="7" fill="#6a6a6a"/>
<text x="120" y="140.3" font-family="Liberation Sans" font-size="9.6" fill="#222" text-anchor="middle">0</text>
<rect x="170" y="148" width="1" height="7" fill="#6a6a6a"/>
<text x="170" y="140.3" font-family="Liberation Sans" font-size="9.6" fill="#222" text-anchor="middle">10</text>
<rect x="220" y="148" width="1" height="7" fill="#6a6a6a"/>
<text x="220" y="140.3" font-family="Liberation Sans" font-size="9.6" fill="#222" text-anchor="middle">20</text>
<rect x="270" y="148" width="1" height="7" fill="#6a6a6a"/>
<text x="270" y="140.3" font-family="Liberation Sans" font-size="9.6" fill="#222" text-anchor="middle">30</text>
<rect x="320" y="148" width="1" height="7" fill="#6a6a6a"/>
<text x="320" y="140.3" font-family="Liberation Sans" font-size="9.6" fill="#222" text-anchor="middle">40</text>
<rect x="370" y="148" width="1" height="7" fill="#6a6a6a"/>
<text x="370" y="140.3" font-family="Liberation Sans" font-size="9.6" fill="#222" text-anchor="middle">50</text>
<rect x="420" y="148" width="1" height="7" fill="#6a6a6a"/>
<text x="420" y="140.3" font-family="Liberation Sans" font-size="9.6" fill="#222" text-anchor="middle">60</text>
<rect x="470" y="148" width="1" height="7" fill="#6a6a6a"/>
<text x="470" y="140.3" font-family="Liberation Sans" font-size="9.6" fill="#222" text-anchor="middle">70</text>
<rect x="520" y="148" width="1" height="7" fill="#6a6a6a"/>
<text x="520" y="140.3" font-family="Liberation Sans" font-size="9.6" fill="#222" text-anchor="middle">80</text>
<rect x="570" y="148" width="1" height="7" fill="#6a6a6a"/>
<text x="570" y="140.3" font-family="Liberation Sans" font-size="9.6" fill="#222" text-anchor="middle">90</text>
<rect x="620" y="148" width="1" height="7" fill="#6a6a6a"/>
<text x="620" y="140.3" font-family="Liberation Sans" font-size="9.6" fill="#222" text-anchor="middle">100</text>
<rect x="670" y="148" width="1" height="7" fill="#6a6a6a"/>
<text x="670" y="140.3" font-family="Liberation Sans" font-size="9.6" fill="#222" text-anchor="middle">110</text>
<rect x="720" y="148" width="1" height="7" fill="#6a6a6a"/>
<text x="720" y="140.3" font-family="Liberation Sans" font-size="9.6" fill="#222" text-anchor="middle">120</text>
<rect x="770" y="148" width="1" height="7" fill="#6a6a6a"/>
<text x="770" y="140.3" font-family="Liberation Sans" font-size="9.6" fill="#222" text-anchor="middle">130</text>
<rect x="820" y="148" width="1" height="7" fill="#6a6a6a"/>
<text x="820" y="140.3" font-family="Liberation Sans" font-size="9.6" fill="#222" text-anchor="middle">140</text>
<rect x="870" y="148" width="1" height="7" fill="#6a6a6a"/>
<text x="870" y="140.3" font-family="Liberation Sans" font-size="9.6" fill="#222" text-anchor="middle">150</text>
<rect x="920" y="148" width="1" height="7" fill="#6a6a6a"/>
<text x="920" y="140.3" font-family="Liberation Sans" font-size="9.6" fill="#222" text-anchor="middle">160</text>
<rect x="970" y="148" width="1" height="7" fill="#6a6a6a"/>
<text x="970" y="140.3" font-family="Liberation Sans" font-size="9.6" fill="#222" text-anchor="middle">170</text>
<rect x="1020" y="148" width="1" height="7" fill="#6a6a6a"/>
<text x="1020" y="140.3" font-family="Liberation Sans" font-size="9.6" fill="#222" text-anchor="middle">180</text>
<rect x="1070" y="148" width="1" height="7" fill="#6a6a6a"/>
<text x="1070" y="140.3" font-family="Liberation Sans" font-size="9.6" fill="#222" text-anchor="middle">190</text>
<rect x="1120" y="148" width="1" height="7" fill="#6a6a6a"/>
<text x="1120" y="140.3" font-family="Liberation Sans" font-size="9.6" fill="#222" text-anchor="middle">200</text>
<rect x="95" y="154" width="1059" height="1" fill="#ffffff"/>
<path d="M331.6,145 L343,145 L337.3,151.2 Z" fill="#000" stroke="#fff" stroke-width="0.6" stroke-linejoin="round"/>
<clipPath id="vclip"><rect x="72" y="155" width="23" height="577"/></clipPath>
<g clip-path="url(#vclip)">
<rect x="88" y="707" width="7" height="1" fill="#6a6a6a"/>
<text transform="translate(80.4,707) rotate(-90)" x="0" y="0" font-family="Liberation Sans" font-size="9.6" fill="#222" text-anchor="middle">0</text>
<rect x="88" y="657" width="7" height="1" fill="#6a6a6a"/>
<text transform="translate(80.4,657) rotate(-90)" x="0" y="0" font-family="Liberation Sans" font-size="9.6" fill="#222" text-anchor="middle">10</text>
<rect x="88" y="607" width="7" height="1" fill="#6a6a6a"/>
<text transform="translate(80.4,607) rotate(-90)" x="0" y="0" font-family="Liberation Sans" font-size="9.6" fill="#222" text-anchor="middle">20</text>
<rect x="88" y="557" width="7" height="1" fill="#6a6a6a"/>
<text transform="translate(80.4,557) rotate(-90)" x="0" y="0" font-family="Liberation Sans" font-size="9.6" fill="#222" text-anchor="middle">30</text>
<rect x="88" y="507" width="7" height="1" fill="#6a6a6a"/>
<text transform="translate(80.4,507) rotate(-90)" x="0" y="0" font-family="Liberation Sans" font-size="9.6" fill="#222" text-anchor="middle">40</text>
<rect x="88" y="457" width="7" height="1" fill="#6a6a6a"/>
<text transform="translate(80.4,457) rotate(-90)" x="0" y="0" font-family="Liberation Sans" font-size="9.6" fill="#222" text-anchor="middle">50</text>
<rect x="88" y="407" width="7" height="1" fill="#6a6a6a"/>
<text transform="translate(80.4,407) rotate(-90)" x="0" y="0" font-family="Liberation Sans" font-size="9.6" fill="#222" text-anchor="middle">60</text>
<rect x="88" y="357" width="7" height="1" fill="#6a6a6a"/>
<text transform="translate(80.4,357) rotate(-90)" x="0" y="0" font-family="Liberation Sans" font-size="9.6" fill="#222" text-anchor="middle">70</text>
<rect x="88" y="307" width="7" height="1" fill="#6a6a6a"/>
<text transform="translate(80.4,307) rotate(-90)" x="0" y="0" font-family="Liberation Sans" font-size="9.6" fill="#222" text-anchor="middle">80</text>
<rect x="88" y="257" width="7" height="1" fill="#6a6a6a"/>
<text transform="translate(80.4,257) rotate(-90)" x="0" y="0" font-family="Liberation Sans" font-size="9.6" fill="#222" text-anchor="middle">90</text>
<rect x="88" y="207" width="7" height="1" fill="#6a6a6a"/>
<text transform="translate(80.4,207) rotate(-90)" x="0" y="0" font-family="Liberation Sans" font-size="9.6" fill="#222" text-anchor="middle">100</text>
<rect x="88" y="157" width="7" height="1" fill="#6a6a6a"/>
<text transform="translate(80.4,157) rotate(-90)" x="0" y="0" font-family="Liberation Sans" font-size="9.6" fill="#222" text-anchor="middle">110</text>
</g>
<path d="M85,378.1 L85,389.9 L91,384 Z" fill="#000" stroke="#fff" stroke-width="0.6" stroke-linejoin="round"/>
</g>
<clipPath id="cclip"><rect x="95" y="155" width="1043" height="577"/></clipPath>
<g id="canvas" clip-path="url(#cclip)">
<rect x="119.5" y="155" width="1.2" height="577" fill="#161616"/>
<rect x="619.5" y="155" width="1.2" height="577" fill="#161616"/>
<rect x="1119.5" y="155" width="1.2" height="577" fill="#161616"/>
<rect x="95" y="206.5" width="1043" height="1.2" fill="#161616"/>
<rect x="95" y="706.5" width="1043" height="1.2" fill="#161616"/>
<path d="M119.4,706.4h1.4v1.4h-1.4zM119.4,656.4h1.4v1.4h-1.4zM119.4,606.4h1.4v1.4h-1.4zM119.4,556.4h1.4v1.4h-1.4zM119.4,506.4h1.4v1.4h-1.4zM119.4,456.4h1.4v1.4h-1.4zM119.4,406.4h1.4v1.4h-1.4zM119.4,356.4h1.4v1.4h-1.4zM119.4,306.4h1.4v1.4h-1.4zM119.4,256.4h1.4v1.4h-1.4zM119.4,206.4h1.4v1.4h-1.4zM119.4,156.4h1.4v1.4h-1.4zM169.4,706.4h1.4v1.4h-1.4zM169.4,656.4h1.4v1.4h-1.4zM169.4,606.4h1.4v1.4h-1.4zM169.4,556.4h1.4v1.4h-1.4zM169.4,506.4h1.4v1.4h-1.4zM169.4,456.4h1.4v1.4h-1.4zM169.4,406.4h1.4v1.4h-1.4zM169.4,356.4h1.4v1.4h-1.4zM169.4,306.4h1.4v1.4h-1.4zM169.4,256.4h1.4v1.4h-1.4zM169.4,206.4h1.4v1.4h-1.4zM169.4,156.4h1.4v1.4h-1.4zM219.4,706.4h1.4v1.4h-1.4zM219.4,656.4h1.4v1.4h-1.4zM219.4,606.4h1.4v1.4h-1.4zM219.4,556.4h1.4v1.4h-1.4zM219.4,506.4h1.4v1.4h-1.4zM219.4,456.4h1.4v1.4h-1.4zM219.4,406.4h1.4v1.4h-1.4zM219.4,356.4h1.4v1.4h-1.4zM219.4,306.4h1.4v1.4h-1.4zM219.4,256.4h1.4v1.4h-1.4zM219.4,206.4h1.4v1.4h-1.4zM219.4,156.4h1.4v1.4h-1.4zM269.4,706.4h1.4v1.4h-1.4zM269.4,656.4h1.4v1.4h-1.4zM269.4,606.4h1.4v1.4h-1.4zM269.4,556.4h1.4v1.4h-1.4zM269.4,506.4h1.4v1.4h-1.4zM269.4,456.4h1.4v1.4h-1.4zM269.4,406.4h1.4v1.4h-1.4zM269.4,356.4h1.4v1.4h-1.4zM269.4,306.4h1.4v1.4h-1.4zM269.4,256.4h1.4v1.4h-1.4zM269.4,206.4h1.4v1.4h-1.4zM269.4,156.4h1.4v1.4h-1.4zM319.4,706.4h1.4v1.4h-1.4zM319.4,656.4h1.4v1.4h-1.4zM319.4,606.4h1.4v1.4h-1.4zM319.4,556.4h1.4v1.4h-1.4zM319.4,506.4h1.4v1.4h-1.4zM319.4,456.4h1.4v1.4h-1.4zM319.4,406.4h1.4v1.4h-1.4zM319.4,356.4h1.4v1.4h-1.4zM319.4,306.4h1.4v1.4h-1.4zM319.4,256.4h1.4v1.4h-1.4zM319.4,206.4h1.4v1.4h-1.4zM319.4,156.4h1.4v1.4h-1.4zM369.4,706.4h1.4v1.4h-1.4zM369.4,656.4h1.4v1.4h-1.4zM369.4,606.4h1.4v1.4h-1.4zM369.4,556.4h1.4v1.4h-1.4zM369.4,506.4h1.4v1.4h-1.4zM369.4,456.4h1.4v1.4h-1.4zM369.4,406.4h1.4v1.4h-1.4zM369.4,356.4h1.4v1.4h-1.4zM369.4,306.4h1.4v1.4h-1.4zM369.4,256.4h1.4v1.4h-1.4zM369.4,206.4h1.4v1.4h-1.4zM369.4,156.4h1.4v1.4h-1.4zM419.4,706.4h1.4v1.4h-1.4zM419.4,656.4h1.4v1.4h-1.4zM419.4,606.4h1.4v1.4h-1.4zM419.4,556.4h1.4v1.4h-1.4zM419.4,506.4h1.4v1.4h-1.4zM419.4,456.4h1.4v1.4h-1.4zM419.4,406.4h1.4v1.4h-1.4zM419.4,356.4h1.4v1.4h-1.4zM419.4,306.4h1.4v1.4h-1.4zM419.4,256.4h1.4v1.4h-1.4zM419.4,206.4h1.4v1.4h-1.4zM419.4,156.4h1.4v1.4h-1.4zM469.4,706.4h1.4v1.4h-1.4zM469.4,656.4h1.4v1.4h-1.4zM469.4,606.4h1.4v1.4h-1.4zM469.4,556.4h1.4v1.4h-1.4zM469.4,506.4h1.4v1.4h-1.4zM469.4,456.4h1.4v1.4h-1.4zM469.4,406.4h1.4v1.4h-1.4zM469.4,356.4h1.4v1.4h-1.4zM469.4,306.4h1.4v1.4h-1.4zM469.4,256.4h1.4v1.4h-1.4zM469.4,206.4h1.4v1.4h-1.4zM469.4,156.4h1.4v1.4h-1.4zM519.4,706.4h1.4v1.4h-1.4zM519.4,656.4h1.4v1.4h-1.4zM519.4,606.4h1.4v1.4h-1.4zM519.4,556.4h1.4v1.4h-1.4zM519.4,506.4h1.4v1.4h-1.4zM519.4,456.4h1.4v1.4h-1.4zM519.4,406.4h1.4v1.4h-1.4zM519.4,356.4h1.4v1.4h-1.4zM519.4,306.4h1.4v1.4h-1.4zM519.4,256.4h1.4v1.4h-1.4zM519.4,206.4h1.4v1.4h-1.4zM519.4,156.4h1.4v1.4h-1.4zM569.4,706.4h1.4v1.4h-1.4zM569.4,656.4h1.4v1.4h-1.4zM569.4,606.4h1.4v1.4h-1.4zM569.4,556.4h1.4v1.4h-1.4zM569.4,506.4h1.4v1.4h-1.4zM569.4,456.4h1.4v1.4h-1.4zM569.4,406.4h1.4v1.4h-1.4zM569.4,356.4h1.4v1.4h-1.4zM569.4,306.4h1.4v1.4h-1.4zM569.4,256.4h1.4v1.4h-1.4zM569.4,206.4h1.4v1.4h-1.4zM569.4,156.4h1.4v1.4h-1.4zM619.4,706.4h1.4v1.4h-1.4zM619.4,656.4h1.4v1.4h-1.4zM619.4,606.4h1.4v1.4h-1.4zM619.4,556.4h1.4v1.4h-1.4zM619.4,506.4h1.4v1.4h-1.4zM619.4,456.4h1.4v1.4h-1.4zM619.4,406.4h1.4v1.4h-1.4zM619.4,356.4h1.4v1.4h-1.4zM619.4,306.4h1.4v1.4h-1.4zM619.4,256.4h1.4v1.4h-1.4zM619.4,206.4h1.4v1.4h-1.4zM619.4,156.4h1.4v1.4h-1.4zM669.4,706.4h1.4v1.4h-1.4zM669.4,656.4h1.4v1.4h-1.4zM669.4,606.4h1.4v1.4h-1.4zM669.4,556.4h1.4v1.4h-1.4zM669.4,506.4h1.4v1.4h-1.4zM669.4,456.4h1.4v1.4h-1.4zM669.4,406.4h1.4v1.4h-1.4zM669.4,356.4h1.4v1.4h-1.4zM669.4,306.4h1.4v1.4h-1.4zM669.4,256.4h1.4v1.4h-1.4zM669.4,206.4h1.4v1.4h-1.4zM669.4,156.4h1.4v1.4h-1.4zM719.4,706.4h1.4v1.4h-1.4zM719.4,656.4h1.4v1.4h-1.4zM719.4,606.4h1.4v1.4h-1.4zM719.4,556.4h1.4v1.4h-1.4zM719.4,506.4h1.4v1.4h-1.4zM719.4,456.4h1.4v1.4h-1.4zM719.4,406.4h1.4v1.4h-1.4zM719.4,356.4h1.4v1.4h-1.4zM719.4,306.4h1.4v1.4h-1.4zM719.4,256.4h1.4v1.4h-1.4zM719.4,206.4h1.4v1.4h-1.4zM719.4,156.4h1.4v1.4h-1.4zM769.4,706.4h1.4v1.4h-1.4zM769.4,656.4h1.4v1.4h-1.4zM769.4,606.4h1.4v1.4h-1.4zM769.4,556.4h1.4v1.4h-1.4zM769.4,506.4h1.4v1.4h-1.4zM769.4,456.4h1.4v1.4h-1.4zM769.4,406.4h1.4v1.4h-1.4zM769.4,356.4h1.4v1.4h-1.4zM769.4,306.4h1.4v1.4h-1.4zM769.4,256.4h1.4v1.4h-1.4zM769.4,206.4h1.4v1.4h-1.4zM769.4,156.4h1.4v1.4h-1.4zM819.4,706.4h1.4v1.4h-1.4zM819.4,656.4h1.4v1.4h-1.4zM819.4,606.4h1.4v1.4h-1.4zM819.4,556.4h1.4v1.4h-1.4zM819.4,506.4h1.4v1.4h-1.4zM819.4,456.4h1.4v1.4h-1.4zM819.4,406.4h1.4v1.4h-1.4zM819.4,356.4h1.4v1.4h-1.4zM819.4,306.4h1.4v1.4h-1.4zM819.4,256.4h1.4v1.4h-1.4zM819.4,206.4h1.4v1.4h-1.4zM819.4,156.4h1.4v1.4h-1.4zM869.4,706.4h1.4v1.4h-1.4zM869.4,656.4h1.4v1.4h-1.4zM869.4,606.4h1.4v1.4h-1.4zM869.4,556.4h1.4v1.4h-1.4zM869.4,506.4h1.4v1.4h-1.4zM869.4,456.4h1.4v1.4h-1.4zM869.4,406.4h1.4v1.4h-1.4zM869.4,356.4h1.4v1.4h-1.4zM869.4,306.4h1.4v1.4h-1.4zM869.4,256.4h1.4v1.4h-1.4zM869.4,206.4h1.4v1.4h-1.4zM869.4,156.4h1.4v1.4h-1.4zM919.4,706.4h1.4v1.4h-1.4zM919.4,656.4h1.4v1.4h-1.4zM919.4,606.4h1.4v1.4h-1.4zM919.4,556.4h1.4v1.4h-1.4zM919.4,506.4h1.4v1.4h-1.4zM919.4,456.4h1.4v1.4h-1.4zM919.4,406.4h1.4v1.4h-1.4zM919.4,356.4h1.4v1.4h-1.4zM919.4,306.4h1.4v1.4h-1.4zM919.4,256.4h1.4v1.4h-1.4zM919.4,206.4h1.4v1.4h-1.4zM919.4,156.4h1.4v1.4h-1.4zM969.4,706.4h1.4v1.4h-1.4zM969.4,656.4h1.4v1.4h-1.4zM969.4,606.4h1.4v1.4h-1.4zM969.4,556.4h1.4v1.4h-1.4zM969.4,506.4h1.4v1.4h-1.4zM969.4,456.4h1.4v1.4h-1.4zM969.4,406.4h1.4v1.4h-1.4zM969.4,356.4h1.4v1.4h-1.4zM969.4,306.4h1.4v1.4h-1.4zM969.4,256.4h1.4v1.4h-1.4zM969.4,206.4h1.4v1.4h-1.4zM969.4,156.4h1.4v1.4h-1.4zM1019.4,706.4h1.4v1.4h-1.4zM1019.4,656.4h1.4v1.4h-1.4zM1019.4,606.4h1.4v1.4h-1.4zM1019.4,556.4h1.4v1.4h-1.4zM1019.4,506.4h1.4v1.4h-1.4zM1019.4,456.4h1.4v1.4h-1.4zM1019.4,406.4h1.4v1.4h-1.4zM1019.4,356.4h1.4v1.4h-1.4zM1019.4,306.4h1.4v1.4h-1.4zM1019.4,256.4h1.4v1.4h-1.4zM1019.4,206.4h1.4v1.4h-1.4zM1019.4,156.4h1.4v1.4h-1.4zM1069.4,706.4h1.4v1.4h-1.4zM1069.4,656.4h1.4v1.4h-1.4zM1069.4,606.4h1.4v1.4h-1.4zM1069.4,556.4h1.4v1.4h-1.4zM1069.4,506.4h1.4v1.4h-1.4zM1069.4,456.4h1.4v1.4h-1.4zM1069.4,406.4h1.4v1.4h-1.4zM1069.4,356.4h1.4v1.4h-1.4zM1069.4,306.4h1.4v1.4h-1.4zM1069.4,256.4h1.4v1.4h-1.4zM1069.4,206.4h1.4v1.4h-1.4zM1069.4,156.4h1.4v1.4h-1.4zM1119.4,706.4h1.4v1.4h-1.4zM1119.4,656.4h1.4v1.4h-1.4zM1119.4,606.4h1.4v1.4h-1.4zM1119.4,556.4h1.4v1.4h-1.4zM1119.4,506.4h1.4v1.4h-1.4zM1119.4,456.4h1.4v1.4h-1.4zM1119.4,406.4h1.4v1.4h-1.4zM1119.4,356.4h1.4v1.4h-1.4zM1119.4,306.4h1.4v1.4h-1.4zM1119.4,256.4h1.4v1.4h-1.4zM1119.4,206.4h1.4v1.4h-1.4zM1119.4,156.4h1.4v1.4h-1.4z" fill="#4a4a4a"/>
<path d="M100,707 L140,707 M120,687 L120,727" stroke="#7a0c0c" stroke-width="1.5"/>
<path d="M220,607 L320,607 L320,407" fill="none" stroke="#c6cdd2" stroke-width="2"/>
<line x1="95" y1="384" x2="1138" y2="384" stroke="#584208" stroke-width="1.5" stroke-dasharray="4 2"/>
<line x1="337" y1="155" x2="337" y2="732" stroke="#584208" stroke-width="1.5" stroke-dasharray="4 2"/>
<circle cx="337" cy="383.8" r="38.80" fill="none" stroke="#94aabe" stroke-width="1.1" opacity="0.95"/>
<circle cx="337" cy="383.8" r="37.65" fill="none" stroke="#8aa0b4" stroke-width="1.1" opacity="0.7"/>
<circle cx="337" cy="383.8" r="36.50" fill="none" stroke="#90a6ba" stroke-width="1.1" opacity="0.85"/>
<circle cx="337" cy="383.8" r="35.35" fill="none" stroke="#8298ac" stroke-width="1.1" opacity="0.62"/>
<circle cx="337" cy="383.8" r="34.20" fill="none" stroke="#7a90a4" stroke-width="1.1" opacity="0.68"/>
<circle cx="337" cy="383.8" r="33.05" fill="none" stroke="#667c90" stroke-width="1.1" opacity="0.5"/>
<circle cx="337" cy="383.8" r="31.90" fill="none" stroke="#50647a" stroke-width="1.1" opacity="0.45"/>
<circle cx="337" cy="383.8" r="30.75" fill="none" stroke="#3a4a5a" stroke-width="1.1" opacity="0.3"/>
<circle cx="337" cy="383.8" r="29.60" fill="none" stroke="#26323e" stroke-width="1.1" opacity="0.18"/>
<path d="M320,407 L320,425" fill="none" stroke="#c6cdd2" stroke-width="2" opacity="0.8"/>
<path d="M321.5,383.8 L352.5,383.8 M337,368.7 L337,399.4" stroke="#c4c4c4" stroke-width="3.5"/>
<circle cx="337" cy="383.8" r="1.5" fill="#6a5010"/>
<circle cx="320" cy="406.7" r="4.8" fill="none" stroke="#c01010" stroke-width="1"/>
<path d="M315.5,406.7 L324.5,406.7 M320,402 L320,411.4" stroke="#901010" stroke-width="0.8"/>
</g>
<g id="dock">
<linearGradient id="gTitle" x1="0" y1="0" x2="0" y2="1"><stop offset="0" stop-color="#ededed"/><stop offset="1" stop-color="#dadada"/></linearGradient>
<rect x="1156" y="108" width="299" height="22" fill="url(#gTitle)"/>
<rect x="1156" y="129.5" width="299" height="1" fill="#c4c4c4"/>
<circle cx="1163.9" cy="117.9" r="6.8" fill="#6c6c6c"/>
<path d="M1161,115 L1166.8,120.8 M1166.8,115 L1161,120.8" stroke="#fff" stroke-width="1.7"/>
<circle cx="1181.9" cy="117.9" r="6.8" fill="#6c6c6c"/>
<rect x="1178.6" y="117" width="5.5" height="3.8" fill="none" stroke="#fff" stroke-width="1"/>
<path d="M1180.6,117 L1180.6,115 L1185.6,115 L1185.6,118.8 L1184.1,118.8" fill="none" stroke="#fff" stroke-width="1"/>
<rect x="1155" y="130" width="300" height="26" fill="#a9a9a9"/>
<rect x="1156" y="131.5" width="58" height="23.5" fill="url(#gBtn2)"/>
<rect x="1216" y="131.5" width="58.5" height="23.5" fill="url(#gBtn2)"/>
<rect x="1276.5" y="131.5" width="58.0" height="23.5" fill="url(#gBtn2)"/>
<rect x="1336.5" y="131.5" width="58.0" height="23.5" fill="url(#gBtn2)"/>
<rect x="1396.5" y="131.5" width="57.5" height="23.5" fill="url(#gBtn2)"/>
<g transform="translate(1184.9,142.5) scale(1.0)"><path d="M-7.3,0.5 Q-4,-5.5 0.5,-5.5 Q5.5,-5.5 7.3,0.5 Q4,5.5 0,5.5 Q-4.5,5.5 -7.3,0.5 Z" fill="#000"/><path d="M-4.6,0.8 Q-2,-2.6 0.3,-2.6 Q3,-2.6 4.6,0.8 Q2.5,3.3 0,3.3 Q-2.7,3.3 -4.6,0.8 Z" fill="#fff"/><circle cx="0" cy="0" r="2.4" fill="#000"/><path d="M-7.3,-3 L-5,-2 M7.5,-2.5 L5.5,-1.5" stroke="#000" stroke-width="1"/></g>
<g transform="translate(1244.7,142.5) scale(1.0)"><path d="M-7.3,0.5 Q-4,-5.5 0.5,-5.5 Q5.5,-5.5 7.3,0.5 Q4,5.5 0,5.5 Q-4.5,5.5 -7.3,0.5 Z" fill="#9c9c9c"/><path d="M-4.6,0.8 Q-2,-2.6 0.3,-2.6 Q3,-2.6 4.6,0.8 Q2.5,3.3 0,3.3 Q-2.7,3.3 -4.6,0.8 Z" fill="#fff"/><circle cx="0" cy="0" r="2.4" fill="#9c9c9c"/><path d="M-7.3,-3 L-5,-2 M7.5,-2.5 L5.5,-1.5" stroke="#9c9c9c" stroke-width="1"/></g>
<path d="M1298,142.5 L1311,142.5 M1304.5,136 L1304.5,149" stroke="#f00000" stroke-width="2.8"/>
<rect x="1359" y="141" width="12" height="3" fill="#e80000"/>
<line x1="1418" y1="149.5" x2="1431" y2="136" stroke="#7a5a10" stroke-width="3.2"/><line x1="1418" y1="149.5" x2="1431" y2="136" stroke="#e8a830" stroke-width="2"/><line x1="1428.66" y1="138.43" x2="1431" y2="136" stroke="#e02020" stroke-width="2.6"/><path d="M1418,149.5 L1419.95,147.475" stroke="#f0dcb0" stroke-width="2"/><circle cx="1418" cy="149.5" r="0.8" fill="#333"/>
<rect x="1156" y="156" width="298.5" height="642" fill="#fff"/>
<rect x="1454.2" y="130" width="1" height="668" fill="#c8c8c8"/>
<rect x="1161.5" y="163.5" width="15.5" height="8.3" fill="#fff" stroke="#000" stroke-width="1"/>
<line x1="1395" y1="173.5" x2="1407.5" y2="161" stroke="#7a5a10" stroke-width="3.2"/><line x1="1395" y1="173.5" x2="1407.5" y2="161" stroke="#e8a830" stroke-width="2"/><line x1="1405.25" y1="163.25" x2="1407.5" y2="161" stroke="#e02020" stroke-width="2.6"/><path d="M1395,173.5 L1396.875,171.625" stroke="#f0dcb0" stroke-width="2"/><circle cx="1395" cy="173.5" r="0.8" fill="#333"/>
<g transform="translate(1422.7,167.3) scale(1.0)"><path d="M-7.3,0.5 Q-4,-5.5 0.5,-5.5 Q5.5,-5.5 7.3,0.5 Q4,5.5 0,5.5 Q-4.5,5.5 -7.3,0.5 Z" fill="#000"/><path d="M-4.6,0.8 Q-2,-2.6 0.3,-2.6 Q3,-2.6 4.6,0.8 Q2.5,3.3 0,3.3 Q-2.7,3.3 -4.6,0.8 Z" fill="#fff"/><circle cx="0" cy="0" r="2.4" fill="#000"/><path d="M-7.3,-3 L-5,-2 M7.5,-2.5 L5.5,-1.5" stroke="#000" stroke-width="1"/></g>
<path d="M1441,168 L1441,164.5 A3.8,3.8 0 0 1 1448.6,164.5 L1448.6,168" fill="none" stroke="#b4b4b4" stroke-width="1.4"/>
<rect x="1440" y="167.5" width="9.8" height="6.8" fill="#b4b4b4"/>
<linearGradient id="gRTB" x1="0" y1="0" x2="1" y2="0"><stop offset="0" stop-color="#ededed"/><stop offset="0.9" stop-color="#c8c8c8"/><stop offset="1" stop-color="#b0b0b0"/></linearGradient>
<rect x="1455" y="108" width="45" height="690" fill="url(#gRTB)"/>
<rect x="1455" y="108" width="1" height="690" fill="#c4c4c4"/>
<rect x="1462" y="116" width="2" height="2" fill="#a0a0a0"/>
<rect x="1468" y="116" width="2" height="2" fill="#a0a0a0"/>
<rect x="1474" y="116" width="2" height="2" fill="#a0a0a0"/>
<rect x="1480" y="116" width="2" height="2" fill="#a0a0a0"/>
<rect x="1486" y="116" width="2" height="2" fill="#a0a0a0"/>
<rect x="1456.2" y="120" width="42.9" height="42.7" rx="5" fill="#b6b6b6"/>
<rect x="1456.2" y="417" width="42.9" height="43" rx="5" fill="#b6b6b6"/>
<line x1="1457" y1="261.5" x2="1499" y2="261.5" stroke="#555" stroke-width="1" stroke-dasharray="1 2"/>
<line x1="1457" y1="409.5" x2="1499" y2="409.5" stroke="#555" stroke-width="1" stroke-dasharray="1 2"/>
<rect x="1463.5" y="127.6" width="27" height="27" fill="#fff" stroke="#222" stroke-width="1"/>
<rect x="1463.5" y="127.6" width="27" height="4.5" fill="#000"/>
<rect x="1464.5" y="128.6" width="3" height="3" fill="#fff"/>
<rect x="1463.5" y="174.5" width="27" height="27" fill="#fff" stroke="#222" stroke-width="1"/>
<rect x="1463.5" y="174.5" width="27" height="4.5" fill="#000"/>
<rect x="1464.5" y="175.5" width="3" height="3" fill="#fff"/>
<rect x="1463.5" y="220.7" width="27" height="27" fill="#fff" stroke="#222" stroke-width="1"/>
<rect x="1463.5" y="220.7" width="27" height="4.5" fill="#000"/>
<rect x="1464.5" y="221.7" width="3" height="3" fill="#fff"/>
<rect x="1463.5" y="276.5" width="27" height="27" fill="#fff" stroke="#222" stroke-width="1"/>
<rect x="1463.5" y="276.5" width="27" height="4.5" fill="#000"/>
<rect x="1464.5" y="277.5" width="3" height="3" fill="#fff"/>
<rect x="1463.5" y="322.1" width="27" height="27" fill="#fff" stroke="#222" stroke-width="1"/>
<rect x="1463.5" y="322.1" width="27" height="4.5" fill="#000"/>
<rect x="1464.5" y="323.1" width="3" height="3" fill="#fff"/>
<rect x="1463.5" y="367.5" width="27" height="27" fill="#fff" stroke="#222" stroke-width="1"/>
<rect x="1463.5" y="367.5" width="27" height="4.5" fill="#000"/>
<rect x="1464.5" y="368.5" width="3" height="3" fill="#fff"/>
<rect x="1463.5" y="424.5" width="27" height="27" fill="#fff" stroke="#222" stroke-width="1"/>
<rect x="1463.5" y="424.5" width="27" height="4.5" fill="#000"/>
<rect x="1464.5" y="425.5" width="3" height="3" fill="#fff"/>
<rect x="1463.5" y="471.5" width="27" height="27" fill="#fff" stroke="#222" stroke-width="1"/>
<rect x="1463.5" y="471.5" width="27" height="4.5" fill="#000"/>
<rect x="1464.5" y="472.5" width="3" height="3" fill="#fff"/>
<path d="M1470,141.1 L1477,137.1 L1477,150.1 L1470,153.1 Z" fill="#9a9a9a" stroke="#444" stroke-width="0.8"/>
<path d="M1474,140.1 L1483.5,135.6 L1483.5,148.1 L1474,152.6 Z" fill="#fff" stroke="#444" stroke-width="0.8"/>
<path d="M1476,149.1 L1480.5,138.1 L1481,147.1" fill="none" stroke="#f03030" stroke-width="0.9"/>
<rect x="1470.2" y="184.2" width="10.4" height="7.2" fill="#f4e8c0" stroke="#7a6a40" stroke-width="0.8"/>
<circle cx="1479.3" cy="191.1" r="4.3" fill="#f4e8c0" fill-opacity="0.85" stroke="#7a6a40" stroke-width="0.8"/>
<rect x="1468.5" y="230.0" width="17.2" height="11.5" rx="2" fill="#f6f6f4" stroke="#c4d2ea" stroke-width="1"/>
<rect x="1467" y="285.0" width="3.5" height="3.5" fill="#111"/>
<rect x="1473" y="285.0" width="13" height="3.5" fill="#fff" stroke="#333" stroke-width="0.8"/>
<rect x="1467" y="290.5" width="3.5" height="3.5" fill="#111"/>
<rect x="1473" y="290.5" width="13" height="3.5" fill="#fff" stroke="#333" stroke-width="0.8"/>
<rect x="1467" y="296.0" width="3.5" height="3.5" fill="#111"/>
<rect x="1473" y="296.0" width="13" height="3.5" fill="#fff" stroke="#333" stroke-width="0.8"/>
<path d="M1468.5,329.6 L1485.5,329.6 L1479,337.6 L1479,345.6 L1475,343.6 L1475,337.6 Z" fill="#bcbcbc" stroke="#555" stroke-width="0.8"/>
<path d="M1470,376 L1476,380 L1476,386 L1470,390 Z" fill="#fff" stroke="#333" stroke-width="0.9"/>
<rect x="1476" y="379" width="10" height="8" rx="2" fill="#c8c8c8" stroke="#666" stroke-width="0.8"/>
<line x1="1466" y1="383" x2="1489" y2="383" stroke="#f06060" stroke-width="0.8" stroke-dasharray="1.5 1"/>
<rect x="1467" y="432.0" width="14" height="1.3" fill="#888"/>
<rect x="1467" y="435.6" width="11" height="1.3" fill="#888"/>
<rect x="1467" y="439.2" width="14" height="1.3" fill="#888"/>
<rect x="1467" y="442.8" width="11" height="1.3" fill="#888"/>
<rect x="1464" y="446.5" width="26" height="4" fill="#fff" stroke="#555" stroke-width="0.7"/>
<rect x="1474" y="447.6" width="12" height="1.3" fill="#777"/>
<rect x="1470" y="480" width="14" height="15.5" rx="1" fill="#c08a3a" stroke="#8a5a1a" stroke-width="0.8"/>
<rect x="1472" y="482" width="10" height="12" fill="#f4f4f4"/>
<rect x="1474" y="478.5" width="6" height="3" rx="1" fill="#999"/>
</g>
<g id="bottom">
<!-- scrollbar thumb -->
<rect x="1143" y="243" width="8" height="328" rx="4" fill="#7e7e7e"/>
<!-- area below canvas -->
<rect x="1083" y="732" width="71" height="16" fill="#ececec"/>
<!-- command area -->
<rect x="72" y="748" width="1083" height="2" fill="#b4b4b4"/>
<rect x="73" y="750" width="1081" height="20.5" fill="#fff"/>
<rect x="73" y="770.3" width="1081" height="1.2" fill="#c4c4c4"/>
<rect x="164" y="776.2" width="963" height="17.8" fill="#fff"/>
<rect x="1127.5" y="772.5" width="25" height="25" fill="#f0f0f0" stroke="#c8c8c8" stroke-width="1"/>
<rect x="1133.5" y="779.5" width="13" height="10" fill="#fff" stroke="#222" stroke-width="1"/>
<rect x="1133.5" y="779.5" width="13" height="2.6" fill="#222"/>
<rect x="1153" y="748" width="2" height="50" fill="#b8b8b8"/>
<rect x="72" y="797" width="1083" height="1" fill="#f4f4f4"/>
<!-- status -->
<rect x="0" y="798" width="1500" height="46" fill="#dadada"/>
<rect x="253" y="802" width="1" height="40" fill="#8c8c8c"/>
<circle cx="509.3" cy="822" r="2.8" fill="#c4c4c4"/>
<circle cx="943.2" cy="822" r="2.8" fill="#c4c4c4"/>
<circle cx="1272.5" cy="822" r="2.8" fill="#c4c4c4"/>
<path d="M717.7,815.5 Q717.7,806.5 726,806.5 Q734.3,806.5 734.3,815.5 L734.3,827 Q734.3,835.5 726,835.5 Q717.7,835.5 717.7,827 Z" fill="#fff" stroke="#555" stroke-width="1"/>
<path d="M717.7,820 Q726,817.5 734.3,820" fill="none" stroke="#444" stroke-width="1.4"/>
<rect x="724.5" y="809" width="3" height="6.5" rx="1.4" fill="none" stroke="#444" stroke-width="1"/>
<path d="M726,806.5 L726,809 M726,815.5 L726,818.5" stroke="#444" stroke-width="1"/>
</g>

</svg>

<div id="txt">
<span class="t" style="left:86.5px;top:81px;font-size:11px;color:#333;line-height:14px">Auto</span>
<span class="t" style="left:451px;top:81px;font-size:13px;color:#222;line-height:16px">Longueur :</span>
<span class="t" style="left:526px;top:81px;font-size:13px;color:#111;line-height:16px">1</span>
<span class="t" style="left:636.3px;top:81px;font-size:13px;color:#222;line-height:16px">Angle :</span>
<span class="t" style="left:689px;top:81px;font-size:13px;color:#111;line-height:16px">0</span>
<span class="t" style="left:8px;top:452px;font-size:11px;color:#222;line-height:14px">Auto</span>
<span class="t" style="left:598.5px;top:113px;font-size:11.7px;color:#222;line-height:14px">* Sans titre 1</span>
<span class="t" style="left:1276.5px;top:112.5px;font-size:11.8px;color:#333;line-height:14px">Liste des calques</span>
<span class="t" style="left:1183px;top:159px;font-size:14px;color:#111;line-height:17px">0</span>
<span class="t" style="left:1103.5px;top:733px;font-size:13px;color:#111;line-height:16px;letter-spacing:-0.2px">10 &lt; 100</span>
<span class="t" style="left:77.5px;top:750px;font-size:13px;color:#1a1ae8;line-height:16px"><i>Commande:</i> line</span>
<span class="t" style="left:73.3px;top:777.5px;font-size:13px;color:#111;line-height:16px">Premier point :</span>
<span class="t st" style="left:0.5px;top:806px;letter-spacing:0.7px">43.4,64.6</span>
<span class="t st" style="left:2px;top:826.5px;letter-spacing:0.44px">@3.4,4.6</span>
<span class="t st" style="left:256px;top:806px;letter-spacing:0.6px">77.8249&lt;56°</span>
<span class="t st" style="left:256px;top:826.5px;letter-spacing:0.35px">@5.7201&lt;54°</span>
<span class="t st" style="left:637.3px;top:816px;letter-spacing:0.45px">Premier point</span>
<span class="t st" style="left:754px;top:816px;letter-spacing:0.33px">Annuler</span>
<span class="t st" style="left:949.3px;top:816px;letter-spacing:0.42px">Aucune des entités sélectionnées.</span>
</div>
<div class="a" style="left:31px;top:103px;width:139.5px;height:24.5px;border-radius:3px;background:linear-gradient(#fafcff,#e2e8f0);box-shadow:0.5px 1px 2px rgba(0,0,0,0.45);border:1px solid #c8ccd4"></div>
<span class="t" style="left:36.5px;top:108px;font-size:14px;color:#111;line-height:17px">Icône de l'outil actuel</span>

</body></html>
